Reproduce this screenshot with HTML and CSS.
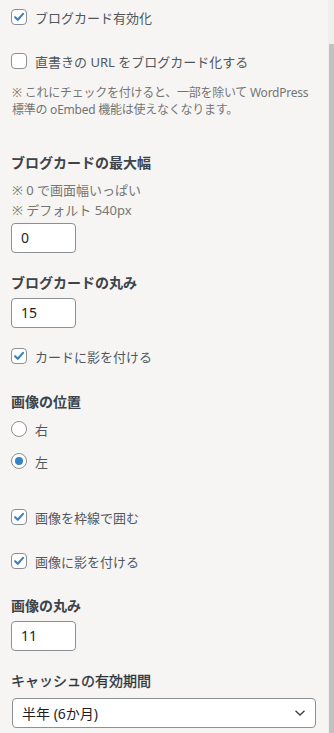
FILE: index.html
```html
<!DOCTYPE html>
<html lang="ja">
<head>
  <meta charset="UTF-8">
  <meta name="viewport" content="width=device-width, initial-scale=1.0">
  <title>ブログカード設定</title>
  <link rel="stylesheet" href="styles.css">
</head>
<body>
  <div class="sidebar">
    <div class="panel">
      <!-- Activation -->
      <label class="check first">
        <span class="box"><svg viewBox="0 0 16 16"><path d="M3.6 8.2 L6.6 11.2 L12.6 4.4"/></svg></span>
        <span>ブログカード有効化</span>
      </label>
      <label class="check gap-28">
        <span class="box"></span>
        <span>直書きの URL をブログカード化する</span>
      </label>
      <p class="help">※ これにチェックを付けると、一部を除いて WordPress<br>標準の oEmbed 機能は使えなくなります。</p>

      <!-- Largeur max -->
      <h3 class="title mt-35">ブログカードの最大幅</h3>
      <p class="note">※ 0 で画面幅いっぱい<br>※ デフォルト 540px</p>
      <div class="field mt-3">0</div>

      <!-- Arrondi -->
      <h3 class="title mt-20">ブログカードの丸み</h3>
      <div class="field mt-5">15</div>
      <label class="check mt-20">
        <span class="box"><svg viewBox="0 0 16 16"><path d="M3.6 8.2 L6.6 11.2 L12.6 4.4"/></svg></span>
        <span>カードに影を付ける</span>
      </label>

      <!-- Position image -->
      <h3 class="title mt-28">画像の位置</h3>
      <label class="radio mt-9">
        <span class="dot"></span>
        <span>右</span>
      </label>
      <label class="radio mt-16">
        <span class="dot on"></span>
        <span>左</span>
      </label>

      <label class="check mt-40">
        <span class="box"><svg viewBox="0 0 16 16"><path d="M3.6 8.2 L6.6 11.2 L12.6 4.4"/></svg></span>
        <span>画像を枠線で囲む</span>
      </label>
      <label class="check gap-28">
        <span class="box"><svg viewBox="0 0 16 16"><path d="M3.6 8.2 L6.6 11.2 L12.6 4.4"/></svg></span>
        <span>画像に影を付ける</span>
      </label>

      <h3 class="title mt-27">画像の丸み</h3>
      <div class="field mt-5">11</div>

      <!-- Cache -->
      <h3 class="title light mt-20">キャッシュの有効期間</h3>
      <div class="select mt-7">
        <span>半年 (6か月)</span>
        <svg viewBox="0 0 12 8"><path d="M1.5 1.8 L6 6 L10.5 1.8"/></svg>
      </div>
    </div>
    <div class="scrollbar"><div class="thumb"></div></div>
  </div>
</body>
</html>
```

FILE: styles.css
```css
* {
  box-sizing: border-box;
  margin: 0;
  padding: 0;
}
body {
  font-family: "Noto Sans", "Noto Sans CJK JP", sans-serif;
  background-color: #f6f5f3;
  color: #50575e;
  width: 334px;
  height: 733px;
  overflow: hidden;
}
.sidebar {
  display: flex;
  height: 733px;
}
.panel {
  flex: 1;
  display: flex;
  flex-direction: column;
  align-items: flex-start;
  padding-left: 11px;
}
/* Barre de défilement */
.scrollbar {
  width: 6px;
  background: #f0efed;
  padding-left: 1px;
}
.thumb {
  margin-top: 44px;
  height: 689px;
  background: #c1c1c1;
}
/* Cases à cocher */
.check, .radio {
  display: flex;
  align-items: center;
  gap: 8px;
  height: 16px;
  font-size: 13px;
  color: #50575e;
}
.box {
  width: 16px;
  height: 16px;
  border: 1px solid #8c8f94;
  border-radius: 4px;
  background: #fff;
  flex-shrink: 0;
}
.box svg {
  display: block;
  width: 14px;
  height: 14px;
  fill: none;
  stroke: #3582c4;
  stroke-width: 2.4;
  stroke-linecap: round;
  stroke-linejoin: round;
}
.dot {
  width: 16px;
  height: 16px;
  border: 1px solid #8c8f94;
  border-radius: 50%;
  background: #fff;
  flex-shrink: 0;
  display: flex;
  align-items: center;
  justify-content: center;
}
.dot.on::after {
  content: "";
  width: 8px;
  height: 8px;
  border-radius: 50%;
  background: #3582c4;
}
.help {
  font-size: 12px;
  line-height: 17px;
  color: #757575;
  margin-top: 15px;
  padding-left: 1px;
  letter-spacing: -0.25px;
  white-space: nowrap;
}
.title {
  font-size: 14px;
  font-weight: bold;
  line-height: 20px;
  color: #3c434a;
}
.title.light {
  font-weight: normal;
  color: #2c3338;
  -webkit-text-stroke: 0.3px #2c3338;
}
.note {
  font-size: 13px;
  line-height: 20px;
  color: #757575;
  margin-top: 7px;
  padding-left: 1px;
}
.field {
  width: 65px;
  height: 30px;
  border: 1px solid #8c8f94;
  border-radius: 4px;
  background: #fff;
  font-size: 14px;
  line-height: 28px;
  padding-left: 9px;
  color: #1e1e1e;
}
.select {
  margin-left: 1px;
  width: 304px;
  height: 30px;
  border: 1px solid #8c8f94;
  border-radius: 4px;
  background: #fff;
  display: flex;
  align-items: center;
  justify-content: space-between;
  padding: 0 9px 0 9px;
  font-size: 14px;
  color: #1e1e1e;
}
.select svg {
  width: 12px;
  height: 8px;
  fill: none;
  stroke: #3c434a;
  stroke-width: 1.4;
}
/* Espacements */
.first { margin-top: 9px; }
.gap-28 { margin-top: 28px; }
.mt-3 { margin-top: 3px; }
.mt-5 { margin-top: 5px; }
.mt-7 { margin-top: 7px; }
.mt-9 { margin-top: 9px; }
.mt-16 { margin-top: 16px; }
.mt-20 { margin-top: 20px; }
.mt-27 { margin-top: 27px; }
.mt-28 { margin-top: 28px; }
.mt-35 { margin-top: 35px; }
.mt-40 { margin-top: 40px; }
```
